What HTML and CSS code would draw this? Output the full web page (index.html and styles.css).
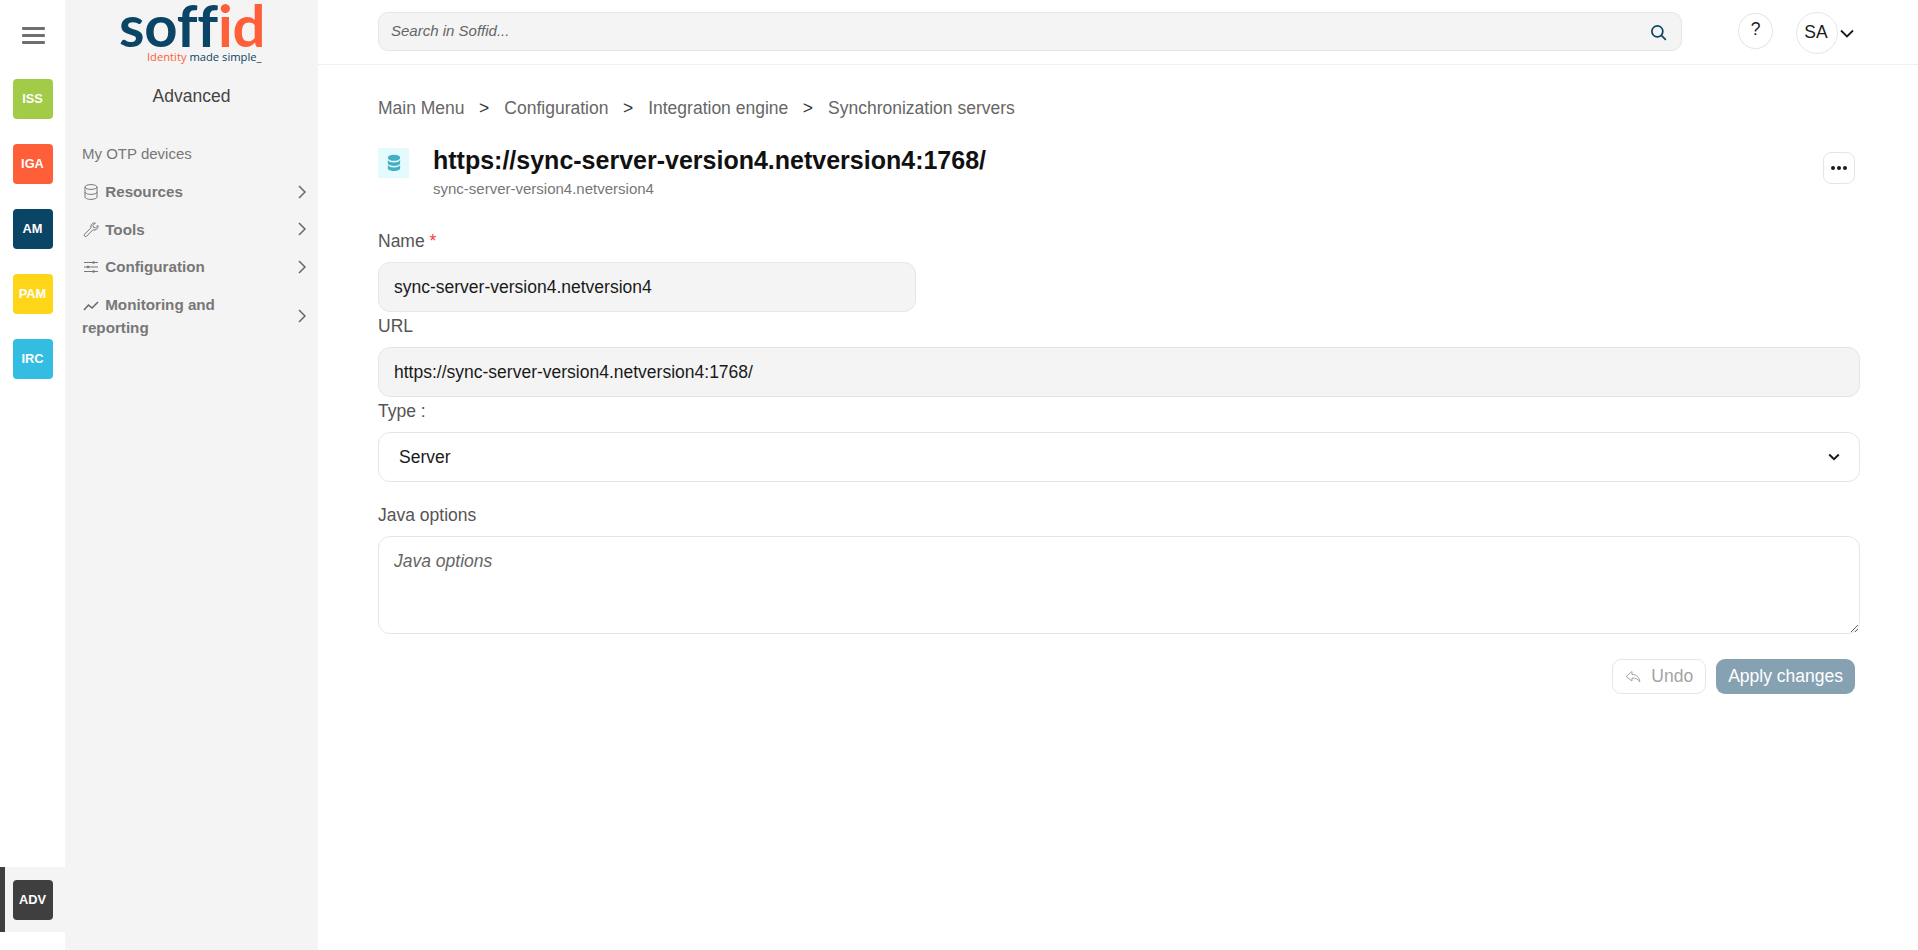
FILE: index.html
```html
<!DOCTYPE html>
<html lang="en">
<head>
<meta charset="utf-8">
<title>Synchronization servers</title>
<link rel="stylesheet" href="styles.css">
</head>
<body>
<nav class="rail">
  <div class="rail-top">
    <button class="burger" aria-label="Menu"><span></span><span></span><span></span></button>
    <div class="apps">
      <a class="app iss">ISS</a>
      <a class="app iga">IGA</a>
      <a class="app am">AM</a>
      <a class="app pam">PAM</a>
      <a class="app irc">IRC</a>
    </div>
  </div>
  <div class="rail-active"><a class="app adv">ADV</a></div>
</nav>
<aside class="side">
  <div class="logo">
    <div class="logo-word"><span class="blue">soff</span><span class="orange">id</span></div>
    <div class="logo-tag"><span class="orange">Identity</span> <span class="blue">made simple_</span></div>
  </div>
  <div class="side-title">Advanced</div>
  <ul class="menu">
    <li class="menu-plain">My OTP devices</li>
    <li class="menu-item">
      <span class="menu-text"><svg class="mi" viewBox="0 0 16 16"><ellipse cx="8" cy="3" rx="6" ry="2.400"/><path d="M2 3v10c0 1.300 2.700 2.400 6 2.400s6-1.100 6-2.400V3M2 8c0 1.300 2.700 2.400 6 2.400s6-1.100 6-2.400"/></svg> Resources</span>
      <svg class="chev" viewBox="0 0 8 14"><path d="M1 1l6 6-6 6"/></svg>
    </li>
    <li class="menu-item">
      <span class="menu-text"><svg class="mi" viewBox="0 0 16 16"><path d="M15 3.500a3.800 3.800 0 0 1-5.100 4.300L3.600 14.300a1.500 1.500 0 0 1-2.100-2.100l6.500-6.300A3.800 3.800 0 0 1 12.400 1L10 3.400l.4 2 2 .5z"/></svg> Tools</span>
      <svg class="chev" viewBox="0 0 8 14"><path d="M1 1l6 6-6 6"/></svg>
    </li>
    <li class="menu-item">
      <span class="menu-text"><svg class="mi" viewBox="0 0 16 16"><path d="M1 3.500h14M1 8h14M1 12.500h14"/><circle class="knob" cx="10.500" cy="3.500" r="1.300"/><circle class="knob" cx="5" cy="8" r="1.300"/><circle class="knob" cx="10.500" cy="12.500" r="1.300"/></svg> Configuration</span>
      <svg class="chev" viewBox="0 0 8 14"><path d="M1 1l6 6-6 6"/></svg>
    </li>
    <li class="menu-item">
      <span class="menu-text"><svg class="mi mi-bold" viewBox="0 0 16 16"><path d="M1 13l4.500-5 3.500 3 6-6"/></svg> Monitoring and reporting</span>
      <svg class="chev" viewBox="0 0 8 14"><path d="M1 1l6 6-6 6"/></svg>
    </li>
  </ul>
</aside>
<div class="main">
  <header class="topbar">
    <div class="search">
      <input class="search-input" type="text" placeholder="Search in Soffid...">
      <svg class="search-icon" viewBox="0 0 18 18"><circle cx="7.800" cy="7.800" r="5.800"/><path d="M12 12l4.800 4.800"/></svg>
    </div>
    <button class="help">?</button>
    <div class="user">
      <span class="avatar">SA</span>
      <svg class="user-chev" viewBox="0 0 14 9"><path d="M1 1.500l6 6 6-6"/></svg>
    </div>
  </header>
  <main class="content">
    <div class="crumbs">
      <span>Main Menu</span><b>&gt;</b><span>Configuration</span><b>&gt;</b><span>Integration engine</span><b>&gt;</b><span>Synchronization servers</span>
    </div>
    <div class="heading">
      <div class="heading-icon">
        <svg viewBox="0 0 16 20"><ellipse cx="8" cy="4" rx="7" ry="3.500"/><path d="M1 6.500c1 2 3.500 2.800 7 2.800s6-.8 7-2.800v3.500c0 1.900-3 3.300-7 3.300s-7-1.400-7-3.300z"/><path d="M1 12.300c1 2 3.500 2.800 7 2.800s6-.8 7-2.800v3.700c0 1.900-3 3.200-7 3.200s-7-1.300-7-3.200z"/></svg>
      </div>
      <div class="heading-text">
        <h1>https://sync-server-version4.netversion4:1768/</h1>
        <p>sync-server-version4.netversion4</p>
      </div>
      <button class="more" aria-label="More"><i></i><i></i><i></i></button>
    </div>
    <form class="form">
      <label class="label">Name <em>*</em></label>
      <input class="field filled short" type="text" value="sync-server-version4.netversion4">
      <label class="label">URL</label>
      <input class="field filled" type="text" value="https://sync-server-version4.netversion4:1768/">
      <label class="label">Type :</label>
      <div class="field select">
        <span>Server</span>
        <svg viewBox="0 0 12 8"><path d="M1.200 1.500L6 6.200l4.800-4.700"/></svg>
      </div>
      <label class="label java">Java options</label>
      <textarea class="field area" placeholder="Java options"></textarea>
      <div class="actions">
        <button type="button" class="undo">
          <svg viewBox="0 0 16 14"><path d="M7 1.500L1.200 6.500 7 11V8c3.500 0 6 .8 7.800 4-.3-4.500-3-7.500-7.800-7.500z"/></svg>
          Undo
        </button>
        <button type="button" class="apply">Apply changes</button>
      </div>
    </form>
  </main>
</div>
</body>
</html>
```
FILE: styles.css
```css
* { box-sizing: border-box; }
html, body { height: 100%; }
body {
  margin: 0;
  display: flex;
  height: 950px;
  overflow: hidden;
  background: #fff;
  font-family: "Liberation Sans", Arial, sans-serif;
  color: #1a1a1a;
}
button { font-family: inherit; }

/* rail */
.rail {
  width: 65px;
  flex: none;
  display: flex;
  flex-direction: column;
  justify-content: space-between;
  padding-bottom: 18px;
}
.burger {
  display: flex;
  flex-direction: column;
  gap: 4px;
  width: 23px;
  margin: 27px 0 0 22px;
  padding: 0;
  background: none;
  border: 0;
}
.burger span { display: block; height: 3px; background: #6f6f6f; border-radius: 1px; }
.apps {
  display: flex;
  flex-direction: column;
  gap: 25px;
  margin: 35px 0 0 13px;
}
.app {
  display: flex;
  align-items: center;
  justify-content: center;
  width: 40px;
  height: 40px;
  padding: 0 1px 2px 0;
  border-radius: 4px;
  color: #fff;
  font-size: 12.800px;
  font-weight: 700;
}
.iss { background: #a2cb48; }
.iga { background: #ff5f38; }
.am { background: #0b4566; }
.pam { background: #ffd51a; }
.irc { background: #33bde3; }
.adv { background: #3f3f3f; }
.rail-active {
  height: 65px;
  padding: 13px 0 0 8px;
  background: #f4f4f4;
  border-left: 5px solid #3f3f3f;
}

/* sidebar */
.side {
  width: 253px;
  flex: none;
  background: #f4f4f4;
}
.logo {
  height: 64px;
  padding: 0 0 0 54px;
}
.logo-word {
  font-family: Lato, sans-serif;
  font-weight: 700;
  font-size: 58px;
  font-variant-ligatures: none;
  letter-spacing: -.2px;
  line-height: 49px;
  height: 50px;
  white-space: nowrap;
}
.logo-tag {
  font-family: "Open Sans", sans-serif;
  font-size: 11.200px;
  line-height: 14px;
  padding-left: 28px;
  white-space: nowrap;
}
.blue { color: #0b4566; }
.orange { color: #ff5f38; }
.side-title {
  margin-top: 20px;
  height: 24px;
  line-height: 24px;
  text-align: center;
  font-size: 17.500px;
  color: #444;
}
.menu {
  list-style: none;
  margin: 27px 0 0;
  padding: 0 12px 0 17px;
  font-size: 15.200px;
  line-height: 23px;
  color: #777;
}
.menu-plain { padding: 7px 0 8px; font-size: 15px; }
.menu-item {
  display: flex;
  align-items: center;
  justify-content: space-between;
  padding: 7px 0 7.500px;
  font-weight: 700;
}
.menu-text { width: 165px; }
.mi {
  width: 16px;
  height: 16px;
  margin: 0 2px 0 1px;
  vertical-align: -3px;
  fill: none;
  stroke: #777;
  stroke-width: 1;
}
.mi-bold { stroke-width: 1.500; stroke: #666; }
.mi .knob { fill: #777; stroke: none; }
.chev {
  width: 8px;
  height: 14px;
  fill: none;
  stroke: #666;
  stroke-width: 1.500;
}

/* main */
.main {
  flex: 1;
  min-width: 0;
  display: flex;
  flex-direction: column;
}
.topbar {
  height: 65px;
  flex: none;
  display: flex;
  align-items: flex-start;
  padding: 12px 0 0 60px;
  border-bottom: 1px solid #f0f0f0;
}
.search {
  width: 1304px;
  height: 39px;
  display: flex;
  align-items: center;
  padding: 0 14px 0 12px;
  background: #f4f4f4;
  border: 1px solid #e6e6e6;
  border-radius: 10px;
}
.search-input {
  flex: 1;
  border: 0;
  outline: 0;
  background: none;
  padding: 0 0 2px;
  font: italic 15px "Liberation Sans", Arial, sans-serif;
  color: #666;
}
.search-input::placeholder { color: #666; opacity: 1; }
.search-icon {
  width: 17px;
  height: 17px;
  margin-top: 2px;
  fill: none;
  stroke: #0b4566;
  stroke-width: 1.800;
}
.help {
  width: 35px;
  height: 36px;
  margin: 1px 0 0 56px;
  padding: 0 0 4px;
  background: #fff;
  border: 1px solid #e6e6e6;
  border-radius: 50%;
  font-size: 17.500px;
  color: #1a1a1a;
}
.user {
  display: flex;
  align-items: center;
  margin: 0 0 0 23px;
}
.avatar {
  display: flex;
  align-items: center;
  justify-content: center;
  width: 42px;
  height: 42px;
  padding: 0 2px 2px 0;
  border: 1px solid #e6e6e6;
  border-radius: 50%;
  font-size: 17.500px;
}
.user-chev {
  width: 14px;
  height: 9px;
  margin-left: 2px;
  fill: none;
  stroke: #1a1a1a;
  stroke-width: 1.800;
}
.content {
  padding: 0 58px 0 60px;
}
.crumbs {
  display: flex;
  align-items: center;
  margin-top: 20px;
  height: 46px;
  font-size: 17.500px;
  color: #666;
}
.crumbs b {
  font-weight: 400;
  color: #333;
  margin: 0 15px 0 14.500px;
}
.heading {
  display: flex;
  align-items: flex-start;
  margin-top: 14px;
  padding-right: 5px;
}
.heading-icon {
  width: 31px;
  height: 30px;
  margin-top: 3px;
  display: flex;
  align-items: center;
  justify-content: center;
  background: #e4fafd;
}
.heading-icon svg { width: 14px; height: 18px; fill: #43aec4; }
.heading-text { flex: 1; margin-left: 24px; }
h1 {
  margin: 0;
  font-size: 25px;
  line-height: 30px;
  font-weight: 700;
  color: #111;
}
p {
  margin: 5px 0 0;
  font-size: 15px;
  line-height: 18px;
  color: #777;
}
.more {
  display: flex;
  align-items: center;
  justify-content: center;
  gap: 2px;
  width: 32px;
  height: 32px;
  margin-top: 7px;
  padding: 0;
  background: #fff;
  border: 1px solid #e6e6e6;
  border-radius: 8px;
}
.more i { width: 4px; height: 4px; border-radius: 50%; background: #1a1a1a; }
.form { display: flex; flex-direction: column; margin-top: 32px; }
.label {
  height: 22px;
  line-height: 22px;
  font-size: 17.500px;
  color: #555;
  margin-bottom: 10px;
}
.label em { font-style: normal; color: #f04040; }
.field {
  display: block;
  width: 100%;
  height: 50px;
  padding: 0 15px;
  border: 1px solid #e6e6e6;
  border-radius: 12px;
  outline: 0;
  font: 17.500px "Liberation Sans", Arial, sans-serif;
  color: #1a1a1a;
}
.filled { background: #f4f4f4; margin-bottom: 3px; }
.short { width: 538px; }
.select {
  display: flex;
  align-items: center;
  justify-content: space-between;
  padding: 0 19px 0 20px;
  background: #fff;
}
.select svg {
  width: 12px;
  height: 8px;
  fill: none;
  stroke: #1a1a1a;
  stroke-width: 2;
}
.java { margin-top: 22px; }
.area {
  height: 98px;
  padding-top: 13px;
  background: #fff;
  line-height: 22px;
}
.area::placeholder { color: #666; font-style: italic; opacity: 1; }
.actions {
  display: flex;
  justify-content: flex-end;
  gap: 10px;
  margin-top: 25px;
  padding-right: 5px;
}
.undo, .apply {
  height: 35px;
  font-size: 17.500px;
  border-radius: 9px;
  padding: 0 12px;
}
.undo {
  display: flex;
  align-items: center;
  gap: 10px;
  background: #fff;
  border: 1px solid #e6e6e6;
  color: #a3a3a3;
}
.undo svg { width: 16px; height: 14px; fill: none; stroke: #a3a3a3; stroke-width: 1; }
.apply {
  background: #86a2b2;
  border: 0;
  color: #fff;
}
```
